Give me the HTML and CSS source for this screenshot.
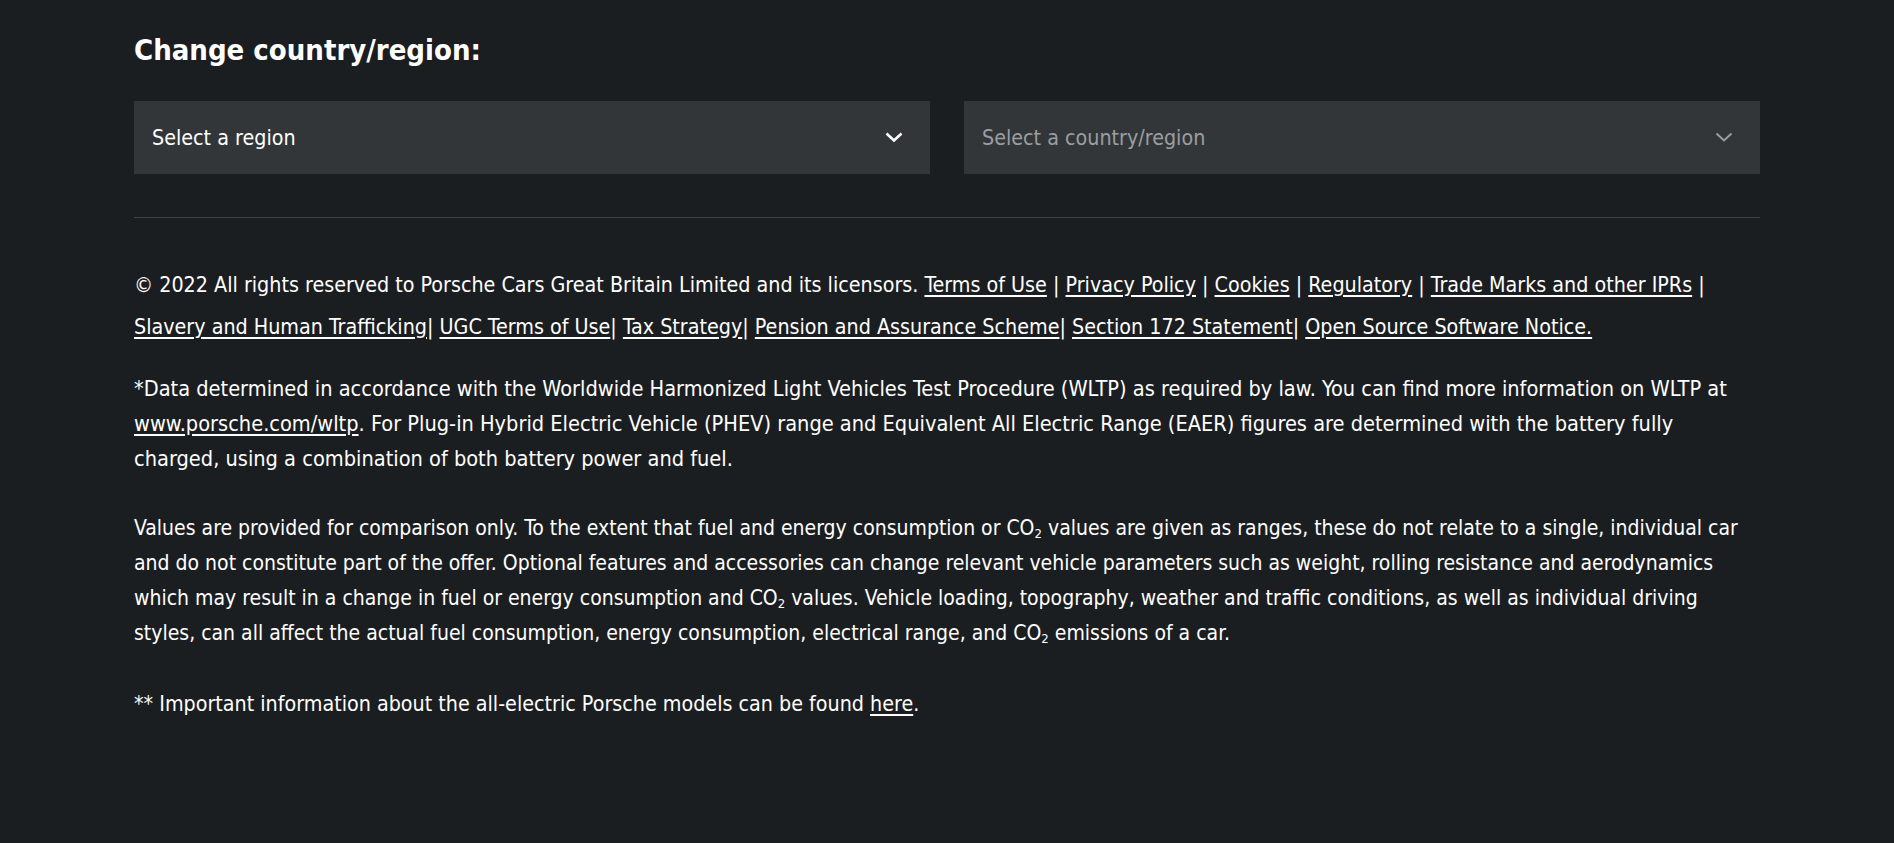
FILE: index.html
```html
<!DOCTYPE html>
<html lang="en">
<head>
<meta charset="utf-8">
<title>Change country/region</title>
<link rel="stylesheet" href="styles.css">
</head>
<body>
<footer class="footer">
  <div class="container">
    <h2 class="title">Change country/region:</h2>
    <div class="selects">
      <div class="select">
        <span class="select-label">Select a region</span>
        <svg class="chevron" width="18" height="11" viewBox="0 0 18 11"><path d="M1.5 1.5 L9 8.5 L16.5 1.5" fill="none" stroke="currentColor" stroke-width="2.6"/></svg>
      </div>
      <div class="select select-disabled">
        <span class="select-label">Select a country/region</span>
        <svg class="chevron" width="18" height="11" viewBox="0 0 18 11"><path d="M1.5 1.5 L9 8.5 L16.5 1.5" fill="none" stroke="currentColor" stroke-width="2"/></svg>
      </div>
    </div>
    <hr class="divider">
    <p class="legal">© 2022 All rights reserved to Porsche Cars Great Britain Limited and its licensors. <a href="#">Terms of Use</a> | <a href="#">Privacy Policy</a> | <a href="#">Cookies</a> | <a href="#">Regulatory</a> | <a href="#">Trade Marks and other IPRs</a> | <a href="#">Slavery and Human Trafficking</a>| <a href="#">UGC Terms of Use</a>| <a href="#">Tax Strategy</a>| <a href="#">Pension and Assurance Scheme</a>| <a href="#">Section 172 Statement</a>| <a href="#">Open Source Software Notice.</a></p>
    <p class="note note-wltp">*Data determined in accordance with the Worldwide Harmonized Light Vehicles Test Procedure (WLTP) as required by law. You can find more information on WLTP at <a href="#">www.porsche.com/wltp</a>. For Plug-in Hybrid Electric Vehicle (PHEV) range and Equivalent All Electric Range (EAER) figures are determined with the battery fully charged, using a combination of both battery power and fuel.</p>
    <p class="note note-values">Values are provided for comparison only. To the extent that fuel and energy consumption or CO<span class="sub">2</span> values are given as ranges, these do not relate to a single, individual car and do not constitute part of the offer. Optional features and accessories can change relevant vehicle parameters such as weight, rolling resistance and aerodynamics which may result in a change in fuel or energy consumption and CO<span class="sub">2</span> values. Vehicle loading, topography, weather and traffic conditions, as well as individual driving styles, can all affect the actual fuel consumption, energy consumption, electrical range, and CO<span class="sub">2</span> emissions of a car.</p>
    <p class="note">** Important information about the all-electric Porsche models can be found <a href="#">here</a>.</p>
  </div>
</footer>
</body>
</html>
```
FILE: styles.css
```css
html, body {
  margin: 0;
  padding: 0;
  background: #1b1e21;
  color: #ffffff;
  font-family: "DejaVu Sans Condensed", "DejaVu Sans", "Liberation Sans", sans-serif;
  font-stretch: condensed;
}

.footer {
  min-height: 843px;
}

.container {
  width: 1626px;
  margin: 0 auto;
}

.title {
  margin: 30px 0 0;
  font-size: 29px;
  line-height: 40px;
  font-weight: 700;
}

.selects {
  display: grid;
  grid-template-columns: 1fr 1fr;
  gap: 34px;
  margin-top: 31px;
}

.select {
  height: 73px;
  background: #323639;
  display: flex;
  align-items: center;
  justify-content: space-between;
  padding: 0 27px 0 18px;
  font-size: 21.3px;
  color: #ffffff;
}

.select-disabled {
  color: #9b9ea1;
}

.chevron {
  display: block;
}

.divider {
  margin: 43px 0 0;
  border: 0;
  height: 1px;
  background: #3e4245;
}

.legal {
  margin: 46px 0 0;
  font-size: 21.3px;
  line-height: 42px;
}

.note {
  margin: 35px 0 0;
  font-size: 21.3px;
  line-height: 35px;
}

.note-wltp {
  margin-top: 23px;
  font-size: 21.6px;
}

.note-values {
  font-size: 21px;
}

a {
  color: #ffffff;
  text-decoration: underline;
  text-underline-offset: 3px;
}

.sub {
  font-size: 0.62em;
  vertical-align: -0.25em;
  line-height: 0;
}
```
